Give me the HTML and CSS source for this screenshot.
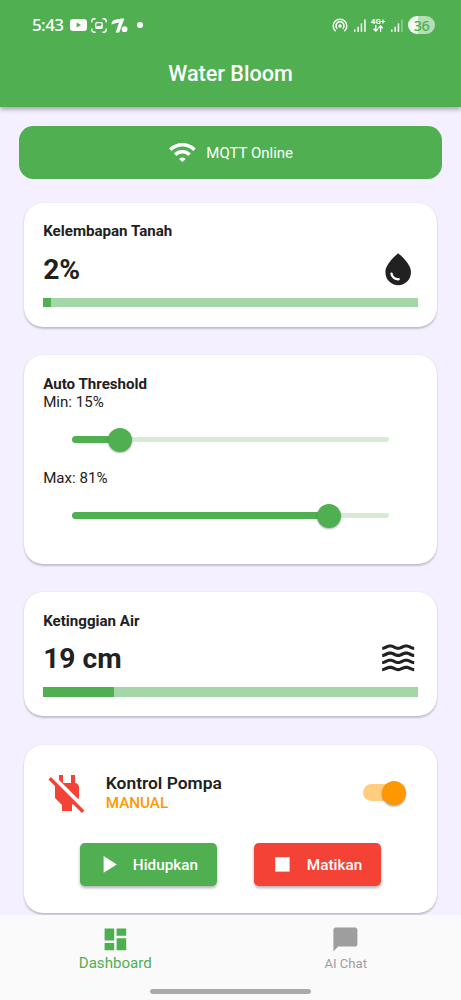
FILE: index.html
```html
<!DOCTYPE html>
<html lang="id">
<head>
<meta charset="utf-8">
<title>Water Bloom</title>
<link rel="stylesheet" href="styles.css">
</head>
<body>
<div class="app">
  <header class="appbar">
    <div class="statusbar">
      <div class="status-left">
        <span class="clock">5:43</span>
        <svg class="i-video" viewBox="0 0 17 12"><rect width="17" height="12" rx="3.2" fill="#fff"/><path d="M6.6 3.5v5l4.4-2.5z" fill="#4caf50"/></svg>
        <svg class="i-shot" viewBox="0 0 16 15" fill="none" stroke="#fff" stroke-width="1.4"><path d="M.8 4.6V3.2Q.8.8 3.2.8h1.4M11.4.8h1.4q2.4 0 2.4 2.4v1.4M15.2 10.4v1.4q0 2.4-2.4 2.4h-1.4M4.6 14.2H3.2q-2.4 0-2.4-2.4v-1.4"/><rect x="4.8" y="4.6" width="6.4" height="5.8" rx="1" stroke-width="1.2"/><path d="M5 9.2l2-1.4 1.5.6L11 7v3.4H5z" fill="#fff" stroke="none"/></svg>
        <svg class="i-brand" viewBox="0 0 17 15"><path d="M9.4.4h4L8.2 14.4H4.6z" fill="#fff"/><path d="M.4 6.4Q.8 2 5 1.6L9.6.8 8.2 4.6 5.4 5z" fill="#fff"/><circle cx="13.6" cy="11.2" r="2.9" fill="#fff"/></svg>
        <span class="dot"></span>
      </div>
      <div class="status-right">
        <svg class="i-hotspot" viewBox="0 0 16 15" fill="none" stroke="#fff" stroke-width="1.5"><path d="M3.6 13.2a6.8 6.8 0 1 1 8.8 0M5.3 10.8a4 4 0 1 1 5.4 0"/><circle cx="8" cy="8" r="1.7" fill="#fff" stroke="none"/></svg>
        <svg class="i-signal" viewBox="0 0 12 13" fill="#fff"><rect y="10.4" width="1.5" height="2.4"/><rect x="3.4" y="7.8" width="1.5" height="5"/><rect x="6.7" y="4.4" width="1.5" height="8.4"/><rect x="10.2" y=".4" width="1.5" height="12.4"/></svg>
        <span class="net"><b>4G+</b>
          <svg class="i-arrows" viewBox="0 0 10 7" fill="none" stroke="#fff" stroke-width="1.3"><path d="M2.8 0v6M.6 3.8l2.2 2.3L5 3.8M7.6 7V1M5.4 3.2L7.6.9l2.2 2.3"/></svg>
        </span>
        <svg class="i-signal" viewBox="0 0 12 13" fill="#fff"><rect y="10.4" width="1.5" height="2.4"/><rect x="3.4" y="7.8" width="1.5" height="5"/><rect x="6.7" y="4.4" width="1.5" height="8.4"/><rect x="10.2" y=".4" width="1.5" height="12.4" opacity=".4"/></svg>
        <span class="battery">36</span>
      </div>
    </div>
    <h1 class="title">Water Bloom</h1>
  </header>

  <main class="content">
    <div class="banner">
      <svg class="icon" viewBox="0 0 24 24" fill="none" stroke="#fff" stroke-width="2.9" stroke-linejoin="round"><path d="M1.9 9.8a14.3 14.3 0 0 1 20.2 0M6 14a8.5 8.5 0 0 1 12 0"/><path d="M10.1 17.4q1.9-1.1 3.8 0L12 19.2z" fill="#fff" stroke-width="1.2"/></svg>
      <span>MQTT Online</span>
    </div>

    <section class="card">
      <h2 class="label">Kelembapan Tanah</h2>
      <div class="reading">
        <span class="value">2%</span>
        <svg class="icon-l" viewBox="0 0 24 24" fill="#212121"><path d="M12 2c-5.33 4.55-8 8.48-8 11.8 0 4.98 3.8 8.2 8 8.2s8-3.22 8-8.2c0-3.32-2.67-7.25-8-11.8zM7.83 14c.37 0 .67.26.74.62.41 2.22 2.28 2.98 3.64 2.87.43-.02.79.32.79.75 0 .4-.32.73-.72.75-2.13.13-4.62-1.09-5.19-4.12-.08-.45.28-.87.74-.87z"/></svg>
      </div>
      <div class="progress"><div class="fill" style="width:2%"></div></div>
    </section>

    <section class="card">
      <h2 class="label">Auto Threshold</h2>
      <p class="text">Min: 15%</p>
      <div class="slider"><div class="active" style="width:15%"></div><div class="thumb"></div><div class="rest"></div></div>
      <p class="text">Max: 81%</p>
      <div class="slider"><div class="active" style="width:81%"></div><div class="thumb"></div><div class="rest"></div></div>
    </section>

    <section class="card">
      <h2 class="label">Ketinggian Air</h2>
      <div class="reading">
        <span class="value">19 cm</span>
        <svg class="icon-l" viewBox="0 0 24 24" fill="#212121">
          <defs><path id="wave" d="M17 16.75c-1.35 0-2.2.42-2.95.8-.65.33-1.18.6-2.05.6-.9 0-1.4-.25-2.05-.6-.75-.38-1.57-.8-2.95-.8s-2.2.42-2.95.8c-.65.33-1.17.6-2.05.6v1.95c1.35 0 2.2-.42 2.95-.8.65-.33 1.17-.6 2.05-.6s1.4.25 2.05.6c.75.38 1.57.8 2.95.8s2.2-.42 2.95-.8c.65-.33 1.18-.6 2.05-.6.9 0 1.4.25 2.05.6.75.38 1.58.8 2.95.8v-1.95c-.9 0-1.4-.25-2.05-.6-.75-.38-1.6-.8-2.95-.8z"/></defs>
          <use href="#wave"/><use href="#wave" y="-4.45"/><use href="#wave" y="-8.9"/><use href="#wave" y="-13.35"/>
        </svg>
      </div>
      <div class="progress"><div class="fill" style="width:19%"></div></div>
    </section>

    <section class="card pump">
      <div class="tile">
        <svg class="icon-xl" viewBox="0 0 24 24" fill="#f44336"><path d="M18 14.49V9c0-1-1.01-2.01-2-2V3h-2v4h-4V3H8v2.48l9.51 9.5.49-.49zm-1.76 1.77L7.2 7.2l-.01.01L3.98 4 2.71 5.25l3.36 3.36C6.04 8.74 6 8.87 6 9v5.48L9.5 18v3h5v-3l.48-.48L19.45 22l1.26-1.28-4.47-4.46z"/></svg>
        <div class="names">
          <h2 class="pump-title">Kontrol Pompa</h2>
          <span class="mode">MANUAL</span>
        </div>
        <div class="switch"><div class="knob"></div></div>
      </div>
      <div class="actions">
        <button class="btn on"><svg class="icon" viewBox="0 0 24 24" fill="#fff"><path d="M8 5v14l11-7z"/></svg>Hidupkan</button>
        <button class="btn off"><svg class="icon" viewBox="0 0 24 24" fill="#fff"><path d="M6 6h12v12H6z"/></svg>Matikan</button>
      </div>
    </section>
  </main>

  <nav class="bottomnav">
    <div class="tabs">
      <a class="tab current"><svg class="icon" viewBox="0 0 24 24" fill="#4caf50"><path d="M3 13h8V3H3v10zm0 8h8v-6H3v6zm10 0h8V11h-8v10zm0-18v6h8V3h-8z"/></svg><span>Dashboard</span></a>
      <a class="tab"><svg class="icon" viewBox="0 0 24 24" fill="#9e9e9e"><path d="M20 2H4c-1.1 0-2 .9-2 2v18l4-4h14c1.1 0 2-.9 2-2V4c0-1.1-.9-2-2-2z"/></svg><span>AI Chat</span></a>
    </div>
    <div class="handle"></div>
  </nav>
</div>
</body>
</html>
```
FILE: styles.css
```css
* { box-sizing: border-box; margin: 0; padding: 0; }
body { font-family: Roboto, sans-serif; color: #212121; background: #f4f0ff; }
svg { display: block; flex: none; }
.app { width: 461px; height: 1000px; overflow: hidden; display: flex; flex-direction: column; }

.appbar { height: 106.6px; flex: none; background: #50af51; color: #fff; box-shadow: 0 2px 5px rgba(0,0,0,.36); }
.statusbar { height: 50px; padding: 0 26px 0 32px; display: flex; justify-content: space-between; align-items: center; }
.status-left, .status-right { display: flex; align-items: center; }
.clock { font: 500 17px/24px "Noto Sans", sans-serif; width: 38px; letter-spacing: -.6px; }
.i-video { width: 17px; height: 12px; }
.i-shot { width: 16px; height: 15px; margin-left: 4px; }
.i-brand { width: 17px; height: 15px; margin-left: 4px; }
.dot { width: 5.5px; height: 5.5px; border-radius: 50%; background: #fff; margin-left: 9px; }
.i-hotspot { width: 16px; height: 15px; }
.i-signal { width: 12px; height: 13px; margin-left: 6px; }
.net { width: 14px; height: 14px; margin-left: 5.5px; display: flex; flex-direction: column; align-items: center; }
.net b { font-size: 8px; line-height: 7px; }
.i-arrows { width: 10px; height: 7px; }
.battery { width: 27px; height: 18px; margin-left: 5px; border-radius: 9px; background: linear-gradient(90deg, #f3faf3 36%, #b5deb6 36%); color: #50af51; font: 500 14.5px/18px "Noto Sans", sans-serif; letter-spacing: -.6px; text-align: center; }
.title { font-size: 21.6px; line-height: 26px; font-weight: 500; text-align: center; padding-top: 11px; height: 46px; }

.content { flex: 1; min-height: 0; padding: 19px 24px 0; display: flex; flex-direction: column; gap: 28.8px; }
.banner { flex: none; height: 53px; margin: 0 -4.8px -4.6px; border-radius: 14.4px; background: #50af51; color: #fff; display: flex; align-items: center; justify-content: center; gap: 9.6px; font-size: 15px; }
.banner span { padding-top: 1px; }
.icon { width: 28.8px; height: 28.8px; }
.icon-l { width: 38.4px; height: 38.4px; }
.icon-xl { width: 48px; height: 48px; }

.card { flex: none; padding: 19.2px; background: #fff; border-radius: 19.2px; box-shadow: 0 1.5px 2px rgba(0,0,0,.2), 0 0 2px rgba(0,0,0,.06); }
.label, .text { font-size: 15.1px; line-height: 18.2px; }
.label { font-weight: 700; }
.text { padding-top: .6px; margin-bottom: -.6px; }
.reading { display: flex; align-items: center; justify-content: space-between; margin: 9.6px 0; height: 38.4px; }
.value { font-size: 28.2px; font-weight: 700; padding-top: 1px; }
.progress { height: 9.6px; background: #a5d6a7; }
.fill { height: 100%; background: #50af51; }

.slider { height: 57.6px; padding: 0 28.8px; display: flex; align-items: center; }
.active { height: 7.2px; border-radius: 3.6px 0 0 3.6px; background: #50af51; flex: none; }
.thumb { width: 24px; height: 24px; margin: 0 -12px; border-radius: 50%; background: #50af51; box-shadow: 0 1px 2px rgba(0,0,0,.3); flex: none; z-index: 1; }
.rest { flex: 1; height: 4.8px; border-radius: 0 2.4px 2.4px 0; background: #d5ebd6; }

.pump { height: 168.2px; }
.tile { height: 57px; display: flex; align-items: center; }
.names { margin-left: 14.6px; flex: 1; padding-top: 1px; }
.pump-title { font-size: 17.4px; line-height: 21px; font-weight: 600; }
.mode { display: block; font-size: 15.2px; line-height: 19px; font-weight: 500; color: #ff9800; }
.switch { width: 41px; height: 16.8px; margin-right: 14.2px; border-radius: 9px; background: #ffcc80; display: flex; align-items: center; justify-content: flex-end; }
.knob { width: 24px; height: 24px; margin-right: -2px; border-radius: 50%; background: #ff9800; box-shadow: 0 1.5px 2px rgba(0,0,0,.35); flex: none; }
.actions { display: flex; justify-content: space-evenly; margin-top: 22px; }
.btn { height: 43.4px; border: 0; border-radius: 4.8px; color: #fff; font: 500 15.3px Roboto, sans-serif; display: flex; align-items: center; gap: 9.8px; padding: 0 19.2px 0 14.6px; box-shadow: 0 2px 3px rgba(0,0,0,.3); }
.on { background: #50af51; }
.off { background: #f44336; }

.bottomnav { height: 85.4px; flex: none; background: #fafafa; display: flex; flex-direction: column; align-items: center; z-index: 1; }
.tabs { width: 100%; height: 74.4px; display: flex; }
.tab { flex: 1; display: flex; flex-direction: column; align-items: center; padding-top: 10.2px; color: #9e9e9e; font-size: 13.1px; line-height: 20px; }
.tab span { padding-top: .6px; }
.current { color: #50af51; font-size: 15.1px; line-height: 18px; }
.current span { padding-top: 0; }
.handle { width: 161px; height: 4.8px; border-radius: 2.4px; background: #aaa; }
```
